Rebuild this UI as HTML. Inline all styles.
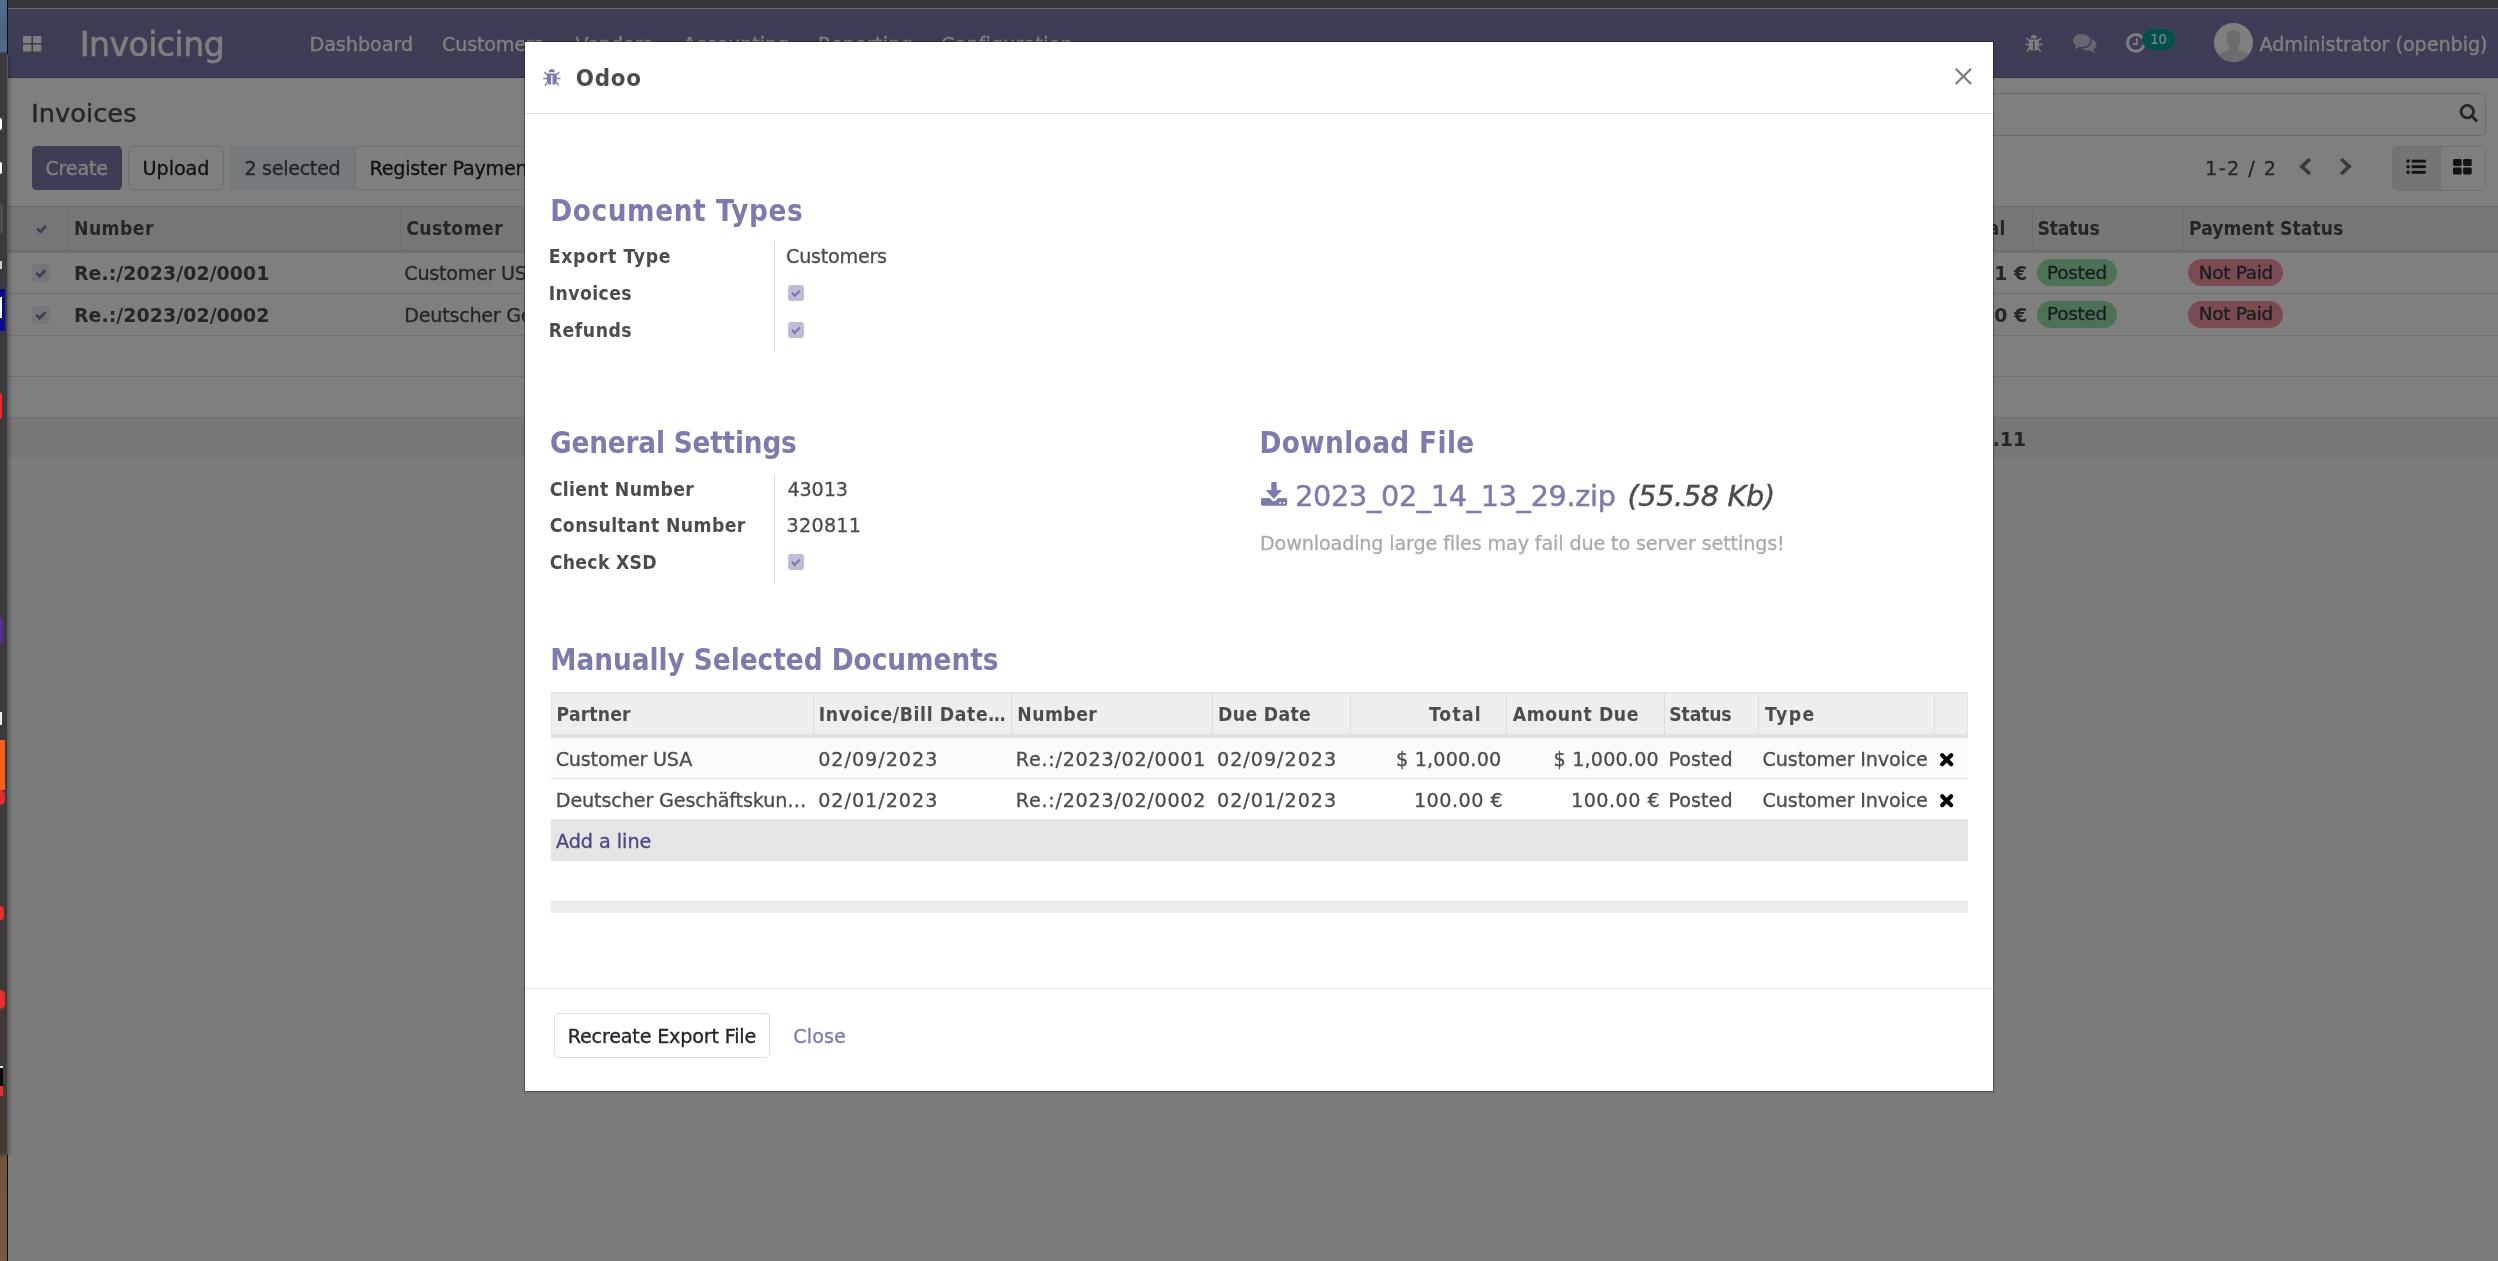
<!DOCTYPE html>
<html lang="en"><head><meta charset="utf-8"><title>Odoo - Invoices</title>
<style>
html,body{margin:0;padding:0}
body{width:2498px;height:1261px;overflow:hidden;position:relative;background:#fff;font-family:'DejaVu Sans','Liberation Sans',sans-serif}
.layer{position:absolute;left:0;top:0;width:2498px;height:1261px;overflow:hidden}
.layer>div,.layer>svg,.layer>span{position:absolute;box-sizing:border-box}
.t{white-space:nowrap;line-height:normal;display:block}
.k-r,.k-i{-webkit-text-stroke:.016em currentColor}
.layer{transform:translateZ(0)}
#backdrop{position:absolute;left:8px;top:9px;width:2490px;height:1252px;background:rgba(0,0,0,.5)}
</style></head><body>
<div class="layer" id="page">
<div style="left:8px;top:9px;width:2490px;height:69px;background:linear-gradient(#7C7BAD,#7C7BAD);border-bottom:1px solid #5f5e97"></div>
<svg style="left:22.8px;top:35.6px;width:18.4px;height:15.6px;overflow:visible;" viewBox="0 0 18.4 15.6"><g fill="#fff"><rect x="0" y="0" width="8.4" height="7" rx="1.3"/><rect x="10" y="0" width="8.4" height="7" rx="1.3"/><rect x="0" y="8.6" width="8.4" height="7" rx="1.3"/><rect x="10" y="8.6" width="8.4" height="7" rx="1.3"/></g></svg>
<svg style="left:2024.7px;top:34.8px;width:17.5px;height:17.3px;overflow:visible;" viewBox="0 0 18 18"><g fill="#fff" stroke="none"><path d="M5.9 3.4A3.1 3.3 0 0 1 12.1 3.4Z"/><path d="M3.9 4.7H14.1V12Q14.1 16.4 9.75 16.5V6.5H8.25V16.5Q3.9 16.4 3.9 12Z"/></g><g stroke="#fff" stroke-width="1.5" fill="none" stroke-linecap="butt"><path d="M1.3 3.2L4.2 5.9M16.7 3.2L13.8 5.9M0 9.9H4M14 9.9H18M4.3 13.6L1.8 17.3M13.7 13.6L16.2 17.3"/></g></svg>
<svg style="left:2072.6px;top:34px;width:23.8px;height:18.8px;overflow:visible;" viewBox="0 0 23.8 18.8"><g fill="rgba(255,255,255,.62)"><path d="M10 4.6C15.5 3.6 23.6 5.6 23.6 10.4C23.6 12.6 22 14.2 20.4 15.1C20.8 16.6 21.6 17.6 22.6 18.6C20.6 18.6 18.6 17.6 17.4 16.2C13.4 16.9 10.4 15.9 9 14.4C14.5 14.4 18.6 11.6 18.6 7.4C18.6 6.4 18.2 5.4 17.6 4.6Z"/><path d="M8.6 0C13.4 0 17.2 2.9 17.2 6.5C17.2 10.1 13.4 13 8.6 13C7.7 13 6.9 12.9 6.1 12.7C4.8 13.9 3 14.8 0.9 14.8C1.9 13.9 2.7 12.8 3 11.5C1.2 10.3 0 8.5 0 6.5C0 2.9 3.8 0 8.6 0Z"/></g></svg>
<svg style="left:2126px;top:32.85px;width:19.7px;height:19.7px;overflow:visible;" viewBox="0 0 19.7 19.7"><circle cx="9.85" cy="9.85" r="8.35" fill="none" stroke="#fff" stroke-width="3"/><path d="M10.9 5V11.1H6.8" fill="none" stroke="#fff" stroke-width="1.7"/></svg>
<div style="left:2141.9px;top:29px;width:33px;height:20.9px;background:#00A09D;border-radius:10.5px"></div>
<svg style="left:2214px;top:23px;width:39px;height:39px;overflow:visible;" viewBox="0 0 39 39"><defs><clipPath id="av"><circle cx="19.5" cy="19.5" r="19.5"/></clipPath></defs><circle cx="19.5" cy="19.5" r="19.5" fill="#fff"/><g clip-path="url(#av)" fill="#d9d9d9"><path d="M19.5 7C23.6 7 26.6 9.8 26.6 14.5C26.6 18 25.6 21.5 24 23.6C23.6 25.2 24 26.6 25.2 27.3L33.5 30.7C35.5 31.6 36.6 33 36.6 35V40H2.4V35C2.4 33 3.5 31.6 5.5 30.7L13.8 27.3C15 26.6 15.4 25.2 15 23.6C13.4 21.5 12.4 18 12.4 14.5C12.4 9.8 15.4 7 19.5 7Z"/></g></svg>
<div style="left:8px;top:206px;width:2490px;height:1px;background:#d6d6d6"></div>
<div style="left:32px;top:146px;width:90px;height:44px;background:#7C7BAD;border-radius:4.5px"></div>
<div style="left:128px;top:146px;width:95.8px;height:44px;background:#fff;border:1px solid #dcdfe3;border-radius:4.5px"></div>
<div style="left:229.8px;top:146px;width:125.4px;height:44px;background:#eaf4fa"></div>
<div style="left:355.3px;top:146px;width:211px;height:44px;background:#fff;border:1px solid #dcdfe3;border-radius:4.5px"></div>
<div style="left:1254px;top:93px;width:1232px;height:43px;background:#fff;border:1px solid #d6d6d6;border-radius:5px"></div>
<svg style="left:2458px;top:102px;width:22px;height:22px;overflow:visible;" viewBox="0 0 22 22"><circle cx="9.3" cy="9.6" r="6.25" fill="none" stroke="#4c4c4c" stroke-width="2.9"/><path d="M13.8 14.1L18.2 18.5" stroke="#4c4c4c" stroke-width="3.1" stroke-linecap="round"/></svg>
<svg style="left:2299px;top:157px;width:13px;height:19px;overflow:visible;" viewBox="0 0 13 19"><path d="M10.9 2L2.9 9.5L10.9 17" fill="none" stroke="#747474" stroke-width="3.7"/></svg>
<svg style="left:2338.9px;top:157px;width:13px;height:19px;overflow:visible;" viewBox="0 0 13 19"><path d="M2.1 2L10.1 9.5L2.1 17" fill="none" stroke="#747474" stroke-width="3.7"/></svg>
<div style="left:2392px;top:146px;width:94px;height:44.6px;background:#fff;border:1px solid #dcdfe3;border-radius:5px;overflow:hidden"><div style="position:absolute;left:-1px;top:-1px;width:48.5px;height:44.6px;background:#e9e9ea"></div></div>
<svg style="left:2406.3px;top:159.4px;width:20px;height:15.4px;overflow:visible;" viewBox="0 0 20 15.4"><g fill="#212529"><circle cx="2" cy="2.1" r="1.75"/><circle cx="2" cy="7.7" r="1.75"/><circle cx="2" cy="13.3" r="1.75"/><rect x="5.7" y="0.7" width="14.1" height="2.9"/><rect x="5.7" y="6.25" width="14.1" height="2.9"/><rect x="5.7" y="11.85" width="14.1" height="2.9"/></g></svg>
<svg style="left:2453.3px;top:158.7px;width:18.7px;height:15.4px;overflow:visible;" viewBox="0 0 18.7 15.4"><g fill="#212529"><rect x="0" y="0" width="8.6" height="6.9" rx="1.4"/><rect x="10.1" y="0" width="8.6" height="6.9" rx="1.4"/><rect x="0" y="8.5" width="8.6" height="6.9" rx="1.4"/><rect x="10.1" y="8.5" width="8.6" height="6.9" rx="1.4"/></g></svg>
<div style="left:8px;top:207px;width:2490px;height:42.4px;background:#eee"></div>
<div style="left:8px;top:249.4px;width:2490px;height:3.2px;background:#dee2e6"></div>
<div style="left:68px;top:207px;width:1px;height:42.4px;background:#dcdcdc"></div>
<div style="left:400.3px;top:207px;width:1px;height:42.4px;background:#dcdcdc"></div>
<div style="left:2032px;top:207px;width:1px;height:42.4px;background:#dcdcdc"></div>
<div style="left:2183.2px;top:207px;width:1px;height:42.4px;background:#dcdcdc"></div>
<svg style="left:32.5px;top:219.8px;width:17.4px;height:17.4px;overflow:visible;" viewBox="0 0 18 18"><rect x="0" y="0" width="18" height="18" rx="3.5" fill="#e9ecef"/><path d="M4.4 8.9L7.6 12.2L13.4 6.2" fill="none" stroke="#7C7BAD" stroke-width="2.7" stroke-linecap="butt" stroke-linejoin="miter"/></svg>
<div style="left:8px;top:293.2px;width:2490px;height:1.2px;background:#dee2e6"></div>
<div style="left:8px;top:335px;width:2490px;height:1.2px;background:#dee2e6"></div>
<div style="left:8px;top:376.3px;width:2490px;height:1.2px;background:#dee2e6"></div>
<div style="left:8px;top:417px;width:2490px;height:1.2px;background:#dee2e6"></div>
<div style="left:8px;top:418px;width:2490px;height:39.5px;background:#eee"></div>
<div style="left:8px;top:457.5px;width:2490px;height:803.5px;background:#f9f9f9"></div>
<svg style="left:32px;top:263.9px;width:18px;height:18px;overflow:visible;" viewBox="0 0 18 18"><rect x="0" y="0" width="18" height="18" rx="4" fill="#e9ecef"/><path d="M4.4 8.9L7.6 12.2L13.4 6.2" fill="none" stroke="#7C7BAD" stroke-width="2.7" stroke-linecap="butt" stroke-linejoin="miter"/></svg>
<svg style="left:32px;top:305.6px;width:18px;height:18px;overflow:visible;" viewBox="0 0 18 18"><rect x="0" y="0" width="18" height="18" rx="4" fill="#e9ecef"/><path d="M4.4 8.9L7.6 12.2L13.4 6.2" fill="none" stroke="#7C7BAD" stroke-width="2.7" stroke-linecap="butt" stroke-linejoin="miter"/></svg>
<div style="left:2037px;top:259.3px;width:80px;height:26.7px;background:#9ae2ac;border-radius:13.4px"></div>
<div style="left:2188px;top:259.3px;width:95px;height:26.7px;background:#f997a4;border-radius:13.4px"></div>
<div style="left:2037px;top:301px;width:80px;height:26.7px;background:#9ae2ac;border-radius:13.4px"></div>
<div style="left:2188px;top:301px;width:95px;height:26.7px;background:#f997a4;border-radius:13.4px"></div>
<div style="left:8px;top:56px;width:5px;height:1100px;background:linear-gradient(90deg,rgba(0,0,0,.2),rgba(0,0,0,0))"></div>
</div>
<div class="layer" id="page-text">
<span class="t k-r g" style="left:79.70px;top:25.19px;font:normal normal 33.2px 'DejaVu Sans','Liberation Sans',sans-serif;color:#fff;letter-spacing:-0.561px">Invoicing</span>
<span class="t k-r g" style="left:309.40px;top:33.18px;font:normal normal 19.2px 'DejaVu Sans','Liberation Sans',sans-serif;color:#fff;letter-spacing:-0.040px">Dashboard</span>
<span class="t k-r g" style="left:442.00px;top:33.18px;font:normal normal 19.2px 'DejaVu Sans','Liberation Sans',sans-serif;color:#fff;letter-spacing:-0.213px">Customers</span>
<span class="t k-r g" style="left:575.50px;top:33.18px;font:normal normal 19.2px 'DejaVu Sans','Liberation Sans',sans-serif;color:#fff;letter-spacing:-0.068px">Vendors</span>
<span class="t k-r g" style="left:683.00px;top:33.18px;font:normal normal 19.2px 'DejaVu Sans','Liberation Sans',sans-serif;color:#fff;letter-spacing:-0.107px">Accounting</span>
<span class="t k-r g" style="left:818.00px;top:33.18px;font:normal normal 19.2px 'DejaVu Sans','Liberation Sans',sans-serif;color:#fff;letter-spacing:0.175px">Reporting</span>
<span class="t k-r g" style="left:941.00px;top:33.18px;font:normal normal 19.2px 'DejaVu Sans','Liberation Sans',sans-serif;color:#fff;letter-spacing:0.128px">Configuration</span>
<span class="t k-r g" style="left:2150.20px;top:31.95px;font:normal normal 13.2px 'DejaVu Sans','Liberation Sans',sans-serif;color:#fff;letter-spacing:-0.190px">10</span>
<span class="t k-r g" style="left:2259.50px;top:32.98px;font:normal normal 19.2px 'DejaVu Sans','Liberation Sans',sans-serif;color:#fff;letter-spacing:-0.066px">Administrator (openbig)</span>
<span class="t k-r " style="left:31.20px;top:98.14px;font:normal normal 25.6px 'DejaVu Sans','Liberation Sans',sans-serif;color:#4c4c4c;letter-spacing:0.071px">Invoices</span>
<span class="t k-r " style="left:45.40px;top:157.08px;font:normal normal 19.2px 'DejaVu Sans','Liberation Sans',sans-serif;color:#fff;letter-spacing:-0.210px">Create</span>
<span class="t k-r " style="left:142.60px;top:157.08px;font:normal normal 19.2px 'DejaVu Sans','Liberation Sans',sans-serif;color:#212529;letter-spacing:-0.090px">Upload</span>
<span class="t k-r " style="left:244.50px;top:157.08px;font:normal normal 19.2px 'DejaVu Sans','Liberation Sans',sans-serif;color:#464b51;letter-spacing:-0.347px">2 selected</span>
<span class="t k-r " style="left:369.50px;top:157.08px;font:normal normal 19.2px 'DejaVu Sans','Liberation Sans',sans-serif;color:#212529;letter-spacing:-0.238px">Register Payment</span>
<span class="t k-r " style="left:2205.00px;top:156.98px;font:normal normal 19.2px 'DejaVu Sans','Liberation Sans',sans-serif;color:#4c4c4c;letter-spacing:1.450px">1-2 / 2</span>
<span class="t k-b " style="left:74.00px;top:216.98px;font:normal bold 19.2px 'DejaVu Sans Condensed','DejaVu Sans','Liberation Sans',sans-serif;color:#4c4c4c;letter-spacing:0.441px">Number</span>
<span class="t k-b " style="left:406.20px;top:216.98px;font:normal bold 19.2px 'DejaVu Sans Condensed','DejaVu Sans','Liberation Sans',sans-serif;color:#4c4c4c;letter-spacing:0.421px">Customer</span>
<span class="t k-b " style="left:759.00px;top:216.98px;font:normal bold 19.2px 'DejaVu Sans Condensed','DejaVu Sans','Liberation Sans',sans-serif;color:#4c4c4c;letter-spacing:0.300px">Invoice Date</span>
<span class="t k-b " style="left:1009.00px;top:216.98px;font:normal bold 19.2px 'DejaVu Sans Condensed','DejaVu Sans','Liberation Sans',sans-serif;color:#4c4c4c;letter-spacing:0.300px">Due Date</span>
<span class="t k-b " style="left:1259.00px;top:216.98px;font:normal bold 19.2px 'DejaVu Sans Condensed','DejaVu Sans','Liberation Sans',sans-serif;color:#4c4c4c;letter-spacing:0.300px">Next Activity</span>
<span class="t k-b " style="left:1640.00px;top:216.98px;font:normal bold 19.2px 'DejaVu Sans Condensed','DejaVu Sans','Liberation Sans',sans-serif;color:#4c4c4c;letter-spacing:0.300px">Tax Excluded</span>
<span class="t k-b " style="left:1957.41px;top:216.98px;font:normal bold 19.2px 'DejaVu Sans Condensed','DejaVu Sans','Liberation Sans',sans-serif;color:#4c4c4c;letter-spacing:0.300px">Total</span>
<span class="t k-b " style="left:2037.40px;top:216.98px;font:normal bold 19.2px 'DejaVu Sans Condensed','DejaVu Sans','Liberation Sans',sans-serif;color:#4c4c4c;letter-spacing:-0.176px">Status</span>
<span class="t k-b " style="left:2189.00px;top:216.98px;font:normal bold 19.2px 'DejaVu Sans Condensed','DejaVu Sans','Liberation Sans',sans-serif;color:#4c4c4c;letter-spacing:0.033px">Payment Status</span>
<span class="t k-B " style="left:73.90px;top:262.26px;font:normal bold 18.9px 'DejaVu Sans','Liberation Sans',sans-serif;color:#4c4c4c;letter-spacing:0.082px">Re.:/2023/02/0001</span>
<span class="t k-B " style="left:73.90px;top:304.06px;font:normal bold 18.9px 'DejaVu Sans','Liberation Sans',sans-serif;color:#4c4c4c;letter-spacing:0.082px">Re.:/2023/02/0002</span>
<span class="t k-r " style="left:404.30px;top:261.98px;font:normal normal 19.2px 'DejaVu Sans','Liberation Sans',sans-serif;color:#4c4c4c;letter-spacing:-0.280px">Customer USA</span>
<span class="t k-r " style="left:404.30px;top:303.78px;font:normal normal 19.2px 'DejaVu Sans','Liberation Sans',sans-serif;color:#4c4c4c;letter-spacing:-0.280px">Deutscher Geschäftskunde</span>
<span class="t k-r " style="left:759.00px;top:261.98px;font:normal normal 19.2px 'DejaVu Sans','Liberation Sans',sans-serif;color:#4c4c4c;letter-spacing:-0.280px">02/09/2023</span>
<span class="t k-r " style="left:759.00px;top:303.78px;font:normal normal 19.2px 'DejaVu Sans','Liberation Sans',sans-serif;color:#4c4c4c;letter-spacing:-0.280px">02/01/2023</span>
<span class="t k-r " style="left:1009.00px;top:261.98px;font:normal normal 19.2px 'DejaVu Sans','Liberation Sans',sans-serif;color:#4c4c4c;letter-spacing:-0.280px">02/09/2023</span>
<span class="t k-r " style="left:1009.00px;top:303.78px;font:normal normal 19.2px 'DejaVu Sans','Liberation Sans',sans-serif;color:#4c4c4c;letter-spacing:-0.280px">02/01/2023</span>
<span class="t k-B " style="left:1934.53px;top:262.26px;font:normal bold 18.9px 'DejaVu Sans','Liberation Sans',sans-serif;color:#4c4c4c;letter-spacing:0.000px">911.11 €</span>
<span class="t k-B " style="left:1934.53px;top:304.06px;font:normal bold 18.9px 'DejaVu Sans','Liberation Sans',sans-serif;color:#4c4c4c;letter-spacing:0.000px">100.00 €</span>
<span class="t k-B " style="left:1932.93px;top:427.76px;font:normal bold 18.9px 'DejaVu Sans','Liberation Sans',sans-serif;color:#4c4c4c;letter-spacing:0.000px">1,011.11</span>
<span class="t k-r " style="left:2047.10px;top:261.72px;font:normal normal 18.4px 'DejaVu Sans','Liberation Sans',sans-serif;color:#343a40;letter-spacing:-0.299px">Posted</span>
<span class="t k-r " style="left:2198.80px;top:261.72px;font:normal normal 18.4px 'DejaVu Sans','Liberation Sans',sans-serif;color:#343a40;letter-spacing:-0.287px">Not Paid</span>
<span class="t k-r " style="left:2047.10px;top:303.42px;font:normal normal 18.4px 'DejaVu Sans','Liberation Sans',sans-serif;color:#343a40;letter-spacing:-0.299px">Posted</span>
<span class="t k-r " style="left:2198.80px;top:303.42px;font:normal normal 18.4px 'DejaVu Sans','Liberation Sans',sans-serif;color:#343a40;letter-spacing:-0.287px">Not Paid</span>
</div>
<div class="layer" id="backdrop-layer"><div id="backdrop"></div></div>
<div class="layer" id="chrome">
<div style="left:8px;top:0px;width:2490px;height:8px;background:#35363a"></div>
<div style="left:8px;top:8px;width:2490px;height:1px;background:#6c6d70"></div>
<div style="left:0px;top:0px;width:8px;height:1261px;background:linear-gradient(180deg,#52708c 0px,#48637f 30px,#506d88 51px,#3a3a3f 54px,#3a3a3f 560px,#3f3a3a 900px,#443b34 1153px,#70553a 1157px,#745a3c 1261px)"></div>
<div style="left:6.8px;top:0px;width:1.2px;height:54px;background:#0c0d10"></div>
<div style="left:7.2px;top:55px;width:0.8px;height:1099px;background:#5a5a60"></div>
<div style="left:7px;top:1155px;width:1px;height:106px;background:#0b0b0b"></div>
<div style="left:0px;top:118px;width:1.5px;height:12px;background:#fff;border-radius:0 2px 2px 0"></div>
<div style="left:0px;top:162px;width:1.5px;height:12px;background:#fff;border-radius:0 2px 2px 0"></div>
<div style="left:0px;top:261px;width:1.5px;height:8px;background:#ccc"></div>
<div style="left:0px;top:203px;width:2.5px;height:31px;background:#4c4c52;border-radius:0 3px 3px 0"></div>
<div style="left:0px;top:289px;width:4.5px;height:42px;background:#0a0a8c"></div>
<div style="left:0px;top:297px;width:2px;height:21px;background:#fff"></div>
<div style="left:0px;top:393px;width:2px;height:26px;background:#e8282d;border-radius:0 2px 2px 0"></div>
<div style="left:0px;top:618px;width:2.5px;height:26px;background:#5a2d91;border-radius:0 3px 3px 0"></div>
<div style="left:0px;top:712px;width:2px;height:13px;background:#eee"></div>
<div style="left:0px;top:740px;width:4.5px;height:50px;background:#f9601f"></div>
<div style="left:0px;top:790px;width:4.5px;height:15px;background:#e03030;border-radius:0 8px 8px 0"></div>
<div style="left:0px;top:906px;width:4px;height:14px;background:#e03030;border-radius:0 8px 8px 0"></div>
<div style="left:0px;top:990px;width:4.5px;height:19px;background:#e63030;border-radius:0 9px 9px 0"></div>
<div style="left:0px;top:1066px;width:3px;height:30px;background:#050505;border-top:2px solid #eee"></div>
<div style="left:0px;top:1086px;width:2.5px;height:10px;background:#e03030"></div>

</div>
<div class="layer" id="modal">
<div style="left:524px;top:41px;width:1470px;height:1051px;background:#fff;background-clip:padding-box;border:1px solid rgba(0,0,0,.27);box-shadow:0 1px 3px rgba(0,0,0,.12)"></div>
<svg style="left:543.2px;top:68.9px;width:17.7px;height:17.3px;overflow:visible;" viewBox="0 0 18 18"><g fill="#7C7BAD" stroke="none"><path d="M5.9 3.4A3.1 3.3 0 0 1 12.1 3.4Z"/><path d="M3.9 4.7H14.1V12Q14.1 16.4 9.75 16.5V6.5H8.25V16.5Q3.9 16.4 3.9 12Z"/></g><g stroke="#7C7BAD" stroke-width="1.5" fill="none" stroke-linecap="butt"><path d="M1.3 3.2L4.2 5.9M16.7 3.2L13.8 5.9M0 9.9H4M14 9.9H18M4.3 13.6L1.8 17.3M13.7 13.6L16.2 17.3"/></g></svg>
<svg style="left:1955px;top:68.2px;width:16.8px;height:16.8px;overflow:visible;" viewBox="0 0 16.8 16.8"><path d="M0.7 0.7L16.1 16.1M16.1 0.7L0.7 16.1" stroke="#7a7a7a" stroke-width="2.1" fill="none"/></svg>
<div style="left:525px;top:113px;width:1468px;height:1px;background:#dee2e6"></div>
<div style="left:774px;top:241.3px;width:1px;height:110.4px;background:#ddd"></div>
<svg style="left:788px;top:285px;width:16px;height:16px;overflow:visible;" viewBox="0 0 18 18"><rect x="0" y="0" width="18" height="18" rx="3.6" fill="#bebdd8"/><path d="M4.4 8.9L7.6 12.2L13.4 6.2" fill="none" stroke="#7C7BAD" stroke-width="2.7" stroke-linecap="butt" stroke-linejoin="miter"/></svg>
<svg style="left:788px;top:321.8px;width:16px;height:16px;overflow:visible;" viewBox="0 0 18 18"><rect x="0" y="0" width="18" height="18" rx="3.6" fill="#bebdd8"/><path d="M4.4 8.9L7.6 12.2L13.4 6.2" fill="none" stroke="#7C7BAD" stroke-width="2.7" stroke-linecap="butt" stroke-linejoin="miter"/></svg>
<div style="left:774px;top:474px;width:1px;height:109.7px;background:#ddd"></div>
<svg style="left:788px;top:554px;width:16px;height:16px;overflow:visible;" viewBox="0 0 18 18"><rect x="0" y="0" width="18" height="18" rx="3.6" fill="#bebdd8"/><path d="M4.4 8.9L7.6 12.2L13.4 6.2" fill="none" stroke="#7C7BAD" stroke-width="2.7" stroke-linecap="butt" stroke-linejoin="miter"/></svg>
<svg style="left:1260.6px;top:482px;width:26.2px;height:23.8px;overflow:visible;" viewBox="0 0 26.2 23.8"><g fill="#7C7BAD"><path d="M10.3 0.6Q10.3 0 10.9 0H15.1Q15.7 0 15.7 0.6V7.9H20Q21.1 7.9 20.4 8.8L13.5 16.4Q12.9 17 12.3 16.4L5.4 8.8Q4.7 7.9 5.8 7.9H10.3Z"/><path d="M1.5 15.9H8.6L11.5 18.7Q12.9 19.9 14.3 18.7L17.2 15.9H24.7Q26.2 15.9 26.2 17.4V22.3Q26.2 23.8 24.7 23.8H1.5Q0 23.8 0 22.3V17.4Q0 15.9 1.5 15.9Z"/></g><rect x="18.3" y="20.1" width="1.7" height="1.7" fill="#fff"/><rect x="22.3" y="20.1" width="1.7" height="1.7" fill="#fff"/></svg>
<div style="left:551px;top:692px;width:1417px;height:42.4px;background:#eee;border:1px solid #e2e2e2;border-bottom:none"></div>
<div style="left:551px;top:734.3px;width:1417px;height:3.9px;background:#dee2e6"></div>
<div style="left:813px;top:693px;width:1px;height:41.3px;background:#dcdcdc"></div>
<div style="left:1011px;top:693px;width:1px;height:41.3px;background:#dcdcdc"></div>
<div style="left:1212px;top:693px;width:1px;height:41.3px;background:#dcdcdc"></div>
<div style="left:1350px;top:693px;width:1px;height:41.3px;background:#dcdcdc"></div>
<div style="left:1506px;top:693px;width:1px;height:41.3px;background:#dcdcdc"></div>
<div style="left:1664px;top:693px;width:1px;height:41.3px;background:#dcdcdc"></div>
<div style="left:1758.3px;top:693px;width:1px;height:41.3px;background:#dcdcdc"></div>
<div style="left:1934.2px;top:693px;width:1px;height:41.3px;background:#dcdcdc"></div>
<div style="left:551px;top:738.2px;width:1417px;height:40px;background:#fbfbfb"></div>
<div style="left:551px;top:778.2px;width:1417px;height:1px;background:#dee2e6"></div>
<div style="left:551px;top:819.2px;width:1417px;height:41.8px;background:#e5e5e5;border-bottom:1px solid #dee2e6"></div>
<svg style="left:1939.8px;top:752.8px;width:13.4px;height:13.4px;overflow:visible;" viewBox="0 0 13.4 13.4"><path d="M2.2 2.2L11.2 11.2M11.2 2.2L2.2 11.2" stroke="#000" stroke-width="4.1" stroke-linecap="round" fill="none"/></svg>
<svg style="left:1939.8px;top:793.7px;width:13.4px;height:13.4px;overflow:visible;" viewBox="0 0 13.4 13.4"><path d="M2.2 2.2L11.2 11.2M11.2 2.2L2.2 11.2" stroke="#000" stroke-width="4.1" stroke-linecap="round" fill="none"/></svg>
<div style="left:551px;top:901px;width:1417px;height:12px;background:#eee;border-top:1px solid #dee2e6"></div>
<div style="left:525px;top:988px;width:1468px;height:1px;background:#dee2e6"></div>
<div style="left:554px;top:1013px;width:216px;height:45px;background:#fff;border:1px solid #dcdfe3;border-radius:5px"></div>
</div>
<div class="layer" id="modal-text">
<span class="t k-b " style="left:575.80px;top:63.61px;font:normal bold 23.8px 'DejaVu Sans Condensed','DejaVu Sans','Liberation Sans',sans-serif;color:#4c4c4c;letter-spacing:0.722px">Odoo</span>
<span class="t k-b " style="left:550.20px;top:193.71px;font:normal bold 29.3px 'DejaVu Sans Condensed','DejaVu Sans','Liberation Sans',sans-serif;color:#7C7BAD;letter-spacing:0.622px">Document Types</span>
<span class="t k-b " style="left:548.80px;top:245.08px;font:normal bold 19.2px 'DejaVu Sans Condensed','DejaVu Sans','Liberation Sans',sans-serif;color:#4c4c4c;letter-spacing:0.697px">Export Type</span>
<span class="t k-b " style="left:548.80px;top:281.88px;font:normal bold 19.2px 'DejaVu Sans Condensed','DejaVu Sans','Liberation Sans',sans-serif;color:#4c4c4c;letter-spacing:0.403px">Invoices</span>
<span class="t k-b " style="left:548.80px;top:318.68px;font:normal bold 19.2px 'DejaVu Sans Condensed','DejaVu Sans','Liberation Sans',sans-serif;color:#4c4c4c;letter-spacing:0.508px">Refunds</span>
<span class="t k-r " style="left:786.10px;top:245.18px;font:normal normal 19.2px 'DejaVu Sans','Liberation Sans',sans-serif;color:#4c4c4c;letter-spacing:-0.275px">Customers</span>
<span class="t k-b " style="left:550.10px;top:426.11px;font:normal bold 29.3px 'DejaVu Sans Condensed','DejaVu Sans','Liberation Sans',sans-serif;color:#7C7BAD;letter-spacing:-0.192px">General Settings</span>
<span class="t k-b " style="left:549.80px;top:478.48px;font:normal bold 19.2px 'DejaVu Sans Condensed','DejaVu Sans','Liberation Sans',sans-serif;color:#4c4c4c;letter-spacing:0.329px">Client Number</span>
<span class="t k-b " style="left:549.80px;top:513.68px;font:normal bold 19.2px 'DejaVu Sans Condensed','DejaVu Sans','Liberation Sans',sans-serif;color:#4c4c4c;letter-spacing:0.403px">Consultant Number</span>
<span class="t k-b " style="left:549.80px;top:550.98px;font:normal bold 19.2px 'DejaVu Sans Condensed','DejaVu Sans','Liberation Sans',sans-serif;color:#4c4c4c;letter-spacing:0.296px">Check XSD</span>
<span class="t k-r " style="left:787.50px;top:478.48px;font:normal normal 19.2px 'DejaVu Sans','Liberation Sans',sans-serif;color:#4c4c4c;letter-spacing:-0.158px">43013</span>
<span class="t k-r " style="left:786.50px;top:513.78px;font:normal normal 19.2px 'DejaVu Sans','Liberation Sans',sans-serif;color:#4c4c4c;letter-spacing:0.252px">320811</span>
<span class="t k-b " style="left:1259.60px;top:426.21px;font:normal bold 29.3px 'DejaVu Sans Condensed','DejaVu Sans','Liberation Sans',sans-serif;color:#7C7BAD;letter-spacing:0.381px">Download File</span>
<span class="t k-r " style="left:1295.20px;top:479.27px;font:normal normal 28.7px 'DejaVu Sans','Liberation Sans',sans-serif;color:#7C7BAD;letter-spacing:-0.318px">2023_02_14_13_29.zip</span>
<span class="t k-i " style="left:1627.40px;top:479.27px;font:italic normal 28.7px 'DejaVu Sans','Liberation Sans',sans-serif;color:#4c4c4c;letter-spacing:-0.329px">(55.58 Kb)</span>
<span class="t k-r " style="left:1260.00px;top:532.28px;font:normal normal 19.2px 'DejaVu Sans','Liberation Sans',sans-serif;color:#aaaaaa;letter-spacing:-0.151px">Downloading large files may fail due to server settings!</span>
<span class="t k-b " style="left:550.20px;top:642.61px;font:normal bold 29.3px 'DejaVu Sans Condensed','DejaVu Sans','Liberation Sans',sans-serif;color:#7C7BAD;letter-spacing:-0.006px">Manually Selected Documents</span>
<span class="t k-b " style="left:556.60px;top:702.78px;font:normal bold 19.2px 'DejaVu Sans Condensed','DejaVu Sans','Liberation Sans',sans-serif;color:#4c4c4c;letter-spacing:0.158px">Partner</span>
<span class="t k-b " style="left:818.80px;top:702.78px;font:normal bold 19.2px 'DejaVu Sans Condensed','DejaVu Sans','Liberation Sans',sans-serif;color:#4c4c4c;letter-spacing:0.628px">Invoice/Bill Date…</span>
<span class="t k-b " style="left:1017.30px;top:702.78px;font:normal bold 19.2px 'DejaVu Sans Condensed','DejaVu Sans','Liberation Sans',sans-serif;color:#4c4c4c;letter-spacing:0.441px">Number</span>
<span class="t k-b " style="left:1218.10px;top:702.78px;font:normal bold 19.2px 'DejaVu Sans Condensed','DejaVu Sans','Liberation Sans',sans-serif;color:#4c4c4c;letter-spacing:0.346px">Due Date</span>
<span class="t k-b " style="left:1428.90px;top:702.78px;font:normal bold 19.2px 'DejaVu Sans Condensed','DejaVu Sans','Liberation Sans',sans-serif;color:#4c4c4c;letter-spacing:1.228px">Total</span>
<span class="t k-b " style="left:1512.70px;top:702.78px;font:normal bold 19.2px 'DejaVu Sans Condensed','DejaVu Sans','Liberation Sans',sans-serif;color:#4c4c4c;letter-spacing:0.591px">Amount Due</span>
<span class="t k-b " style="left:1669.30px;top:702.78px;font:normal bold 19.2px 'DejaVu Sans Condensed','DejaVu Sans','Liberation Sans',sans-serif;color:#4c4c4c;letter-spacing:-0.176px">Status</span>
<span class="t k-b " style="left:1765.10px;top:702.78px;font:normal bold 19.2px 'DejaVu Sans Condensed','DejaVu Sans','Liberation Sans',sans-serif;color:#4c4c4c;letter-spacing:1.464px">Type</span>
<span class="t k-r " style="left:555.70px;top:748.08px;font:normal normal 19.2px 'DejaVu Sans','Liberation Sans',sans-serif;color:#4c4c4c;letter-spacing:-0.216px">Customer USA</span>
<span class="t k-r " style="left:555.80px;top:788.98px;font:normal normal 19.2px 'DejaVu Sans','Liberation Sans',sans-serif;color:#4c4c4c;letter-spacing:-0.149px">Deutscher Geschäftskun…</span>
<span class="t k-r " style="left:818.20px;top:748.08px;font:normal normal 19.2px 'DejaVu Sans','Liberation Sans',sans-serif;color:#4c4c4c;letter-spacing:0.957px">02/09/2023</span>
<span class="t k-r " style="left:1015.80px;top:748.08px;font:normal normal 19.2px 'DejaVu Sans','Liberation Sans',sans-serif;color:#4c4c4c;letter-spacing:0.712px">Re.:/2023/02/0001</span>
<span class="t k-r " style="left:1217.00px;top:748.08px;font:normal normal 19.2px 'DejaVu Sans','Liberation Sans',sans-serif;color:#4c4c4c;letter-spacing:0.957px">02/09/2023</span>
<span class="t k-r " style="left:1668.40px;top:748.08px;font:normal normal 19.2px 'DejaVu Sans','Liberation Sans',sans-serif;color:#4c4c4c;letter-spacing:0.010px">Posted</span>
<span class="t k-r " style="left:1762.60px;top:748.08px;font:normal normal 19.2px 'DejaVu Sans','Liberation Sans',sans-serif;color:#4c4c4c;letter-spacing:-0.173px">Customer Invoice</span>
<span class="t k-r " style="left:818.20px;top:788.98px;font:normal normal 19.2px 'DejaVu Sans','Liberation Sans',sans-serif;color:#4c4c4c;letter-spacing:0.957px">02/01/2023</span>
<span class="t k-r " style="left:1015.80px;top:788.98px;font:normal normal 19.2px 'DejaVu Sans','Liberation Sans',sans-serif;color:#4c4c4c;letter-spacing:0.712px">Re.:/2023/02/0002</span>
<span class="t k-r " style="left:1217.00px;top:788.98px;font:normal normal 19.2px 'DejaVu Sans','Liberation Sans',sans-serif;color:#4c4c4c;letter-spacing:0.957px">02/01/2023</span>
<span class="t k-r " style="left:1668.40px;top:788.98px;font:normal normal 19.2px 'DejaVu Sans','Liberation Sans',sans-serif;color:#4c4c4c;letter-spacing:0.010px">Posted</span>
<span class="t k-r " style="left:1762.60px;top:788.98px;font:normal normal 19.2px 'DejaVu Sans','Liberation Sans',sans-serif;color:#4c4c4c;letter-spacing:-0.173px">Customer Invoice</span>
<span class="t k-r " style="left:1396.00px;top:748.08px;font:normal normal 19.2px 'DejaVu Sans','Liberation Sans',sans-serif;color:#4c4c4c;letter-spacing:0.162px">$ 1,000.00</span>
<span class="t k-r " style="left:1553.50px;top:748.08px;font:normal normal 19.2px 'DejaVu Sans','Liberation Sans',sans-serif;color:#4c4c4c;letter-spacing:0.162px">$ 1,000.00</span>
<span class="t k-r " style="left:1413.90px;top:788.98px;font:normal normal 19.2px 'DejaVu Sans','Liberation Sans',sans-serif;color:#4c4c4c;letter-spacing:0.466px">100.00 €</span>
<span class="t k-r " style="left:1571.00px;top:788.98px;font:normal normal 19.2px 'DejaVu Sans','Liberation Sans',sans-serif;color:#4c4c4c;letter-spacing:0.466px">100.00 €</span>
<span class="t k-r " style="left:556.00px;top:830.18px;font:normal normal 19.2px 'DejaVu Sans','Liberation Sans',sans-serif;color:#484980;letter-spacing:-0.047px">Add a line</span>
<span class="t k-r " style="left:567.70px;top:1025.28px;font:normal normal 19.2px 'DejaVu Sans','Liberation Sans',sans-serif;color:#212529;letter-spacing:-0.199px">Recreate Export File</span>
<span class="t k-r " style="left:793.20px;top:1025.28px;font:normal normal 19.2px 'DejaVu Sans','Liberation Sans',sans-serif;color:#7C7BAD;letter-spacing:0.109px">Close</span>
</div>
</body></html>
